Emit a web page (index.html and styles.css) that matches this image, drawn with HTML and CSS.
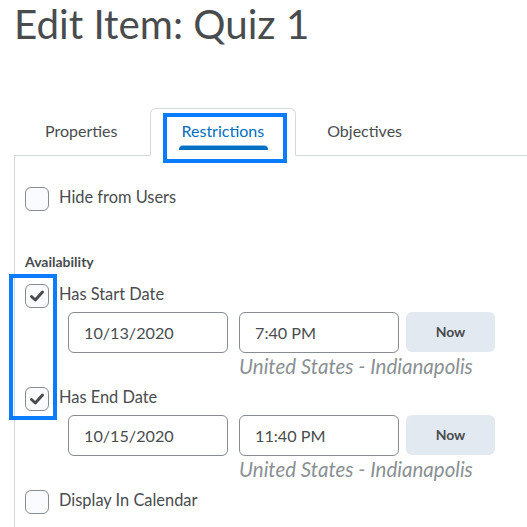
FILE: index.html
```html
<!DOCTYPE html>
<html>
<head>
<meta charset="utf-8">
<link rel="stylesheet" href="styles.css">
</head>
<body>
<h1 class="title">Edit Item: Quiz 1</h1>
<div class="tabs">
  <div class="tab">Properties</div>
  <div class="tab active">Restrictions<span class="underline"></span><span class="hl hl-tab"></span></div>
  <div class="tab">Objectives</div>
  <div class="tab-rest"></div>
</div>
<div class="panel">
  <span class="hl hl-checks"></span>
  <label class="check-row first">
    <span class="box"></span><span class="lbl">Hide from Users</span>
  </label>
  <div class="section">Availability</div>
  <label class="check-row start">
    <span class="box checked"><svg viewBox="0 0 24 24" width="24" height="24"><path d="M6.5 12.5 L10.3 16 L17.5 8" fill="none" stroke="#494c4e" stroke-width="3" stroke-linecap="round" stroke-linejoin="round"/></svg></span><span class="lbl">Has Start Date</span>
  </label>
  <div class="date-group">
    <div class="inputs">
      <div class="field date">10/13/2020</div>
      <div class="field time">7:40 PM</div>
      <div class="now">Now</div>
    </div>
    <div class="tz">United States - Indianapolis</div>
  </div>
  <label class="check-row end">
    <span class="box checked"><svg viewBox="0 0 24 24" width="24" height="24"><path d="M6.5 12.5 L10.3 16 L17.5 8" fill="none" stroke="#494c4e" stroke-width="3" stroke-linecap="round" stroke-linejoin="round"/></svg></span><span class="lbl">Has End Date</span>
  </label>
  <div class="date-group">
    <div class="inputs">
      <div class="field date">10/15/2020</div>
      <div class="field time">11:40 PM</div>
      <div class="now">Now</div>
    </div>
    <div class="tz">United States - Indianapolis</div>
  </div>
  <label class="check-row cal">
    <span class="box"></span><span class="lbl">Display In Calendar</span>
  </label>
</div>
</body>
</html>
```
FILE: styles.css
```css
html, body {
  margin: 0;
  padding: 0;
  background: #ffffff;
  overflow: hidden;
}
body {
  font-family: Lato, "Noto Sans", sans-serif;
  color: #494c4e;
  width: 527px;
  height: 527px;
}
.title {
  margin: 0;
  padding: 0 0 0 14px;
  font-size: 40.3px;
  font-weight: 400;
  line-height: 48px;
  height: 108px;
  color: #494c4e;
}
.tabs {
  display: flex;
  margin-left: 14px;
  height: 48px;
}
.tab {
  position: relative;
  box-sizing: border-box;
  padding: 0 31px;
  font-size: 16px;
  line-height: 46px;
  border-bottom: 1px solid #d3d9e3;
  color: #494c4e;
  white-space: nowrap;
}
.tab:first-child {
  padding: 0 32px 0 31px;
}
.tab.active {
  color: #006fbf;
  border: 1px solid #d3d9e3;
  border-bottom: 1px solid transparent;
  border-radius: 6px 6px 0 0;
  padding: 0 31px;
  line-height: 44px;
  background: #fff;
}
.tab-rest {
  flex: 1;
  border-bottom: 1px solid #d3d9e3;
}
.underline {
  position: absolute;
  left: 28px;
  right: 27px;
  top: 37px;
  height: 4px;
  background: #006fbf;
  border-radius: 4px 4px 0 0;
  box-shadow: 0 -1px 0 #8fbfe6;
}
.hl {
  position: absolute;
  border: 4px solid #0b7bff;
  box-sizing: border-box;
  pointer-events: none;
}
.hl-tab {
  left: 12px;
  top: 4px;
  width: 124px;
  height: 50px;
}
.panel {
  position: relative;
  margin-left: 14px;
  border-left: 1px solid #d3d9e3;
  padding-left: 10px;
  padding-top: 31px;
  height: 340px;
}
.hl-checks {
  left: -6px;
  top: 118px;
  width: 48px;
  height: 146px;
}
.check-row {
  display: flex;
  align-items: center;
  gap: 10px;
  height: 24px;
}
.box {
  box-sizing: border-box;
  width: 24px;
  height: 24px;
  border: 1px solid #868c8f;
  border-radius: 6px;
  background: #f9fbff;
  display: flex;
}
.box svg {
  display: block;
  margin: -1px;
}
.lbl {
  font-size: 16.4px;
  line-height: 20px;
  margin-top: -4px;
}
.section {
  margin-top: 43px;
  font-size: 14px;
  font-weight: 700;
  line-height: 16px;
  margin-bottom: 14px;
}
.check-row.start {
  margin-bottom: 4px;
}
.check-row.end {
  margin-top: 8px;
  margin-bottom: 4px;
}
.check-row.cal {
  margin-top: 8px;
}
.date-group {
  padding-left: 43px;
}
.inputs {
  display: flex;
  gap: 11px;
  height: 41px;
}
.field {
  box-sizing: border-box;
  width: 160px;
  height: 41px;
  border: 1px solid #868c8f;
  border-radius: 6px;
  padding-left: 15px;
  font-size: 16.2px;
  line-height: 39px;
  color: #494c4e;
}
.now {
  margin-left: -4px;
  width: 89px;
  height: 40px;
  border-radius: 6px;
  background: #e3e9f1;
  font-size: 14px;
  font-weight: 700;
  line-height: 40px;
  text-align: center;
  color: #494c4e;
}
.tz {
  padding-left: 171px;
  font-size: 20.5px;
  font-style: italic;
  color: #8a9094;
  line-height: 26px;
  white-space: nowrap;
}
```
